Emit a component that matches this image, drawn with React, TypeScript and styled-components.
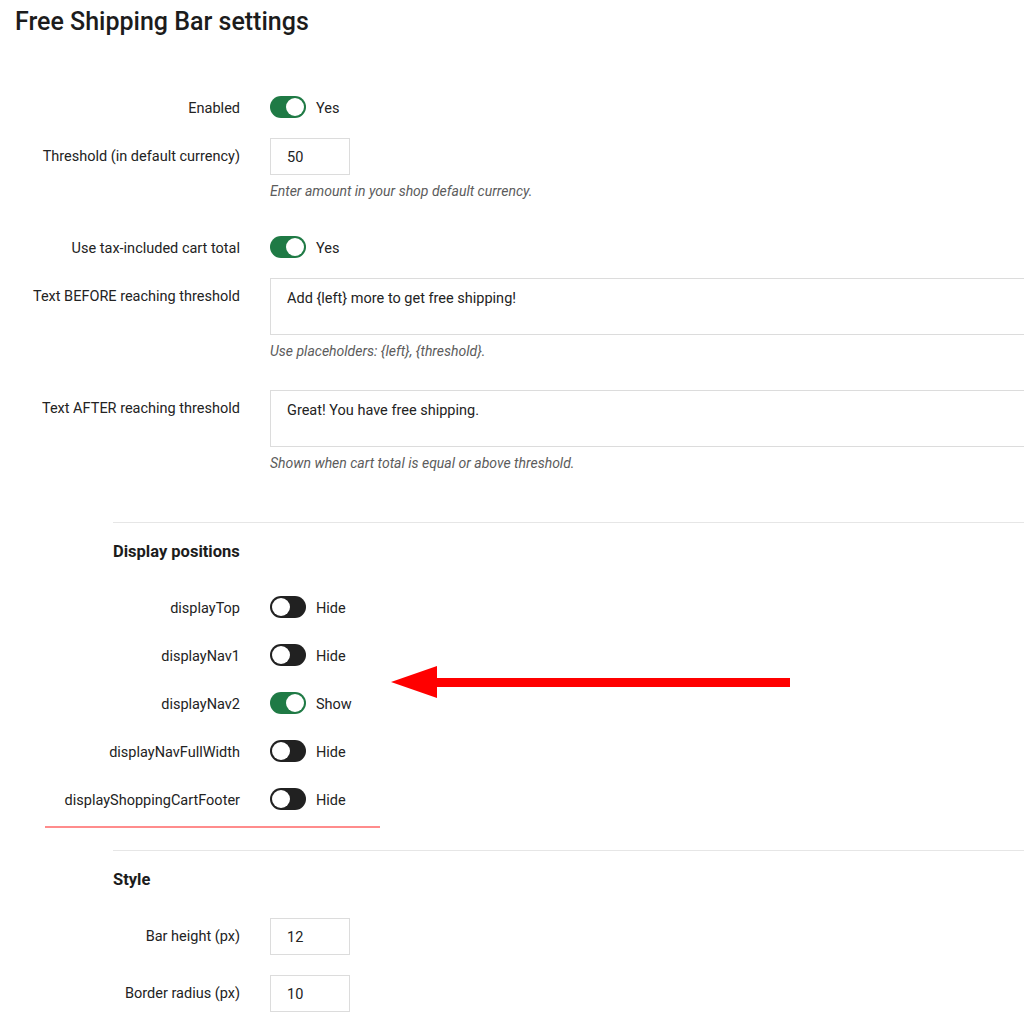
import React from "react";
import styled, { createGlobalStyle } from "styled-components";

const Global = createGlobalStyle`
  html, body { margin: 0; padding: 0; overflow: hidden; background: #fff; }
  body { font-family: Roboto, "Noto Sans", "Liberation Sans", sans-serif; color: #232323; }
`;

const Page = styled.div`
  position: relative;
  padding: 0 15px;
  width: 1200px;
`;

const Title = styled.h1`
  margin: 0;
  padding-top: 7px;
  font-size: 25px;
  line-height: 30px;
  font-weight: 500;
  color: #1c1c1c;
`;

const Form = styled.div`
  padding-top: 53px;
`;

const Row = styled.div`
  display: flex;
  align-items: flex-start;
  gap: 30px;
  margin-bottom: 20px;
`;

const Label = styled.label`
  width: 225px;
  flex: none;
  text-align: right;
  padding-top: 9px;
  font-size: 14.5px;
  line-height: 19px;
  color: #232323;
`;

const Control = styled.div<{ $toggle?: boolean }>`
  display: flex;
  flex-direction: column;
  padding-top: ${(p) => (p.$toggle ? "6px" : "0")};
`;

const SwitchWrap = styled.div`
  display: flex;
  align-items: center;
  gap: 10px;
  height: 22px;
`;

const Track = styled.span<{ $on: boolean }>`
  position: relative;
  display: inline-block;
  width: 36px;
  height: 22px;
  border-radius: 11px;
  background: ${(p) => (p.$on ? "#1f7a45" : "#212121")};
  box-sizing: border-box;
`;

const Knob = styled.span<{ $on: boolean }>`
  position: absolute;
  top: 2px;
  left: ${(p) => (p.$on ? "16px" : "2px")};
  width: 18px;
  height: 18px;
  border-radius: 50%;
  background: #fff;
`;

const SwitchText = styled.span`
  padding-top: 3px;
  font-size: 14.5px;
  line-height: 20px;
  color: #232323;
`;

const Input = styled.div`
  width: 80px;
  height: 37px;
  box-sizing: border-box;
  border: 1px solid #dcdcdc;
  padding: 2px 16px 0;
  display: flex;
  align-items: center;
  font-size: 14.5px;
  color: #232323;
`;

const TextArea = styled.div`
  width: 820px;
  height: 57px;
  box-sizing: border-box;
  border: 1px solid #dcdcdc;
  padding: 10px 16px;
  font-size: 14.5px;
  line-height: 20px;
  color: #232323;
`;

const Help = styled.div`
  margin-top: 7px;
  margin-bottom: 10px;
  font-size: 14px;
  line-height: 18px;
  font-style: italic;
  color: #5c5c5c;
`;

const Separator = styled.hr`
  margin: 40px 0 0 98px;
  border: 0;
  border-top: 1px solid #e6e6e6;
  height: 0;
`;

const SectionTitle = styled.h2`
  margin: 19px 0 28px 98px;
  font-size: 16.5px;
  line-height: 20px;
  font-weight: 700;
  color: #1c1c1c;
`;

const Annotation = styled.div`
  position: absolute;
  left: 45px;
  top: 826px;
  width: 335px;
  height: 2px;
  background: #ff8c8c;
`;

const ArrowSvg = styled.svg`
  position: absolute;
  left: 390px;
  top: 665px;
`;

function Switch({ on, text }: { on: boolean; text: string }) {
  return (
    <SwitchWrap>
      <Track $on={on}>
        <Knob $on={on} />
      </Track>
      <SwitchText>{text}</SwitchText>
    </SwitchWrap>
  );
}

function ToggleRow({ label, on, text }: { label: string; on: boolean; text: string }) {
  return (
    <Row>
      <Label>{label}</Label>
      <Control $toggle>
        <Switch on={on} text={text} />
      </Control>
    </Row>
  );
}

export default function App() {
  return (
    <>
      <Global />
      <Page>
        <Title>Free Shipping Bar settings</Title>
        <Form>
          <ToggleRow label="Enabled" on text="Yes" />
          <Row>
            <Label>Threshold (in default currency)</Label>
            <Control>
              <Input>50</Input>
              <Help>Enter amount in your shop default currency.</Help>
            </Control>
          </Row>
          <ToggleRow label="Use tax-included cart total" on text="Yes" />
          <Row>
            <Label>Text BEFORE reaching threshold</Label>
            <Control>
              <TextArea>Add {"{left}"} more to get free shipping!</TextArea>
              <Help>Use placeholders: {"{left}"}, {"{threshold}"}.</Help>
            </Control>
          </Row>
          <Row>
            <Label>Text AFTER reaching threshold</Label>
            <Control>
              <TextArea>Great! You have free shipping.</TextArea>
              <Help>Shown when cart total is equal or above threshold.</Help>
            </Control>
          </Row>

          <Separator />
          <SectionTitle>Display positions</SectionTitle>
          <ToggleRow label="displayTop" on={false} text="Hide" />
          <ToggleRow label="displayNav1" on={false} text="Hide" />
          <ToggleRow label="displayNav2" on text="Show" />
          <ToggleRow label="displayNavFullWidth" on={false} text="Hide" />
          <ToggleRow label="displayShoppingCartFooter" on={false} text="Hide" />

          <Separator />
          <SectionTitle>Style</SectionTitle>
          <Row>
            <Label>Bar height (px)</Label>
            <Control>
              <Input>12</Input>
            </Control>
          </Row>
          <Row>
            <Label>Border radius (px)</Label>
            <Control>
              <Input>10</Input>
            </Control>
          </Row>
        </Form>
        <Annotation />
        <ArrowSvg width="402" height="34" viewBox="0 0 402 34">
          <rect x="44" y="13" width="356" height="9" fill="#ff0000" />
          <polygon points="1,17 47,1 47,33" fill="#ff0000" />
        </ArrowSvg>
      </Page>
    </>
  );
}
